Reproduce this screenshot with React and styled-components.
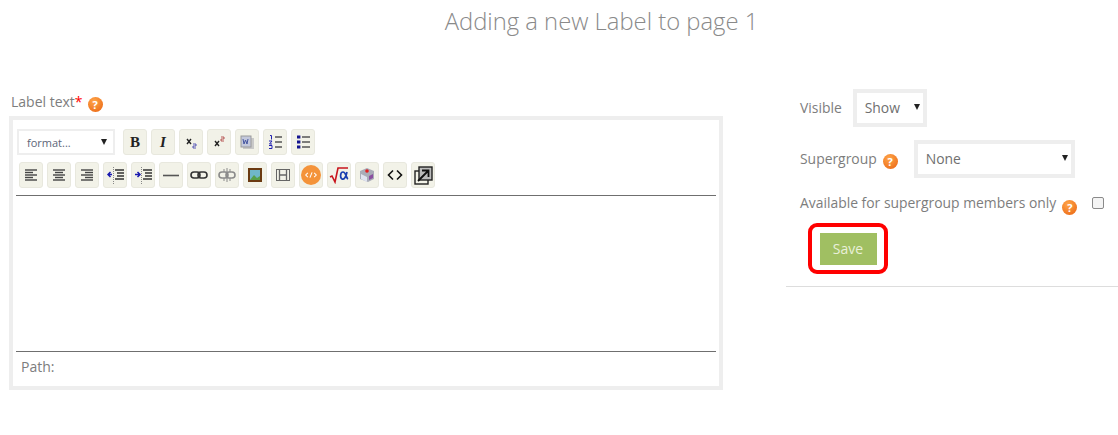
import React from "react";
import styled, { createGlobalStyle } from "styled-components";

const Global = createGlobalStyle`
  html, body { margin: 0; padding: 0; background: #fff; }
  body { font-family: "Open Sans", "Liberation Sans", sans-serif; color: #777; overflow: hidden; }
`;

const Page = styled.div`
  width: 1118px;
  height: 435px;
  overflow: hidden;
`;
const Title = styled.h2`
  margin: 0;
  height: 89px;
  padding-top: 5px;
  box-sizing: border-box;
  text-align: center;
  padding-left: 85px;
  font-size: 23.8px;
  line-height: 33px;
  font-weight: 300;
  color: #8a8a8a;
`;
const Columns = styled.div`
  display: flex;
  align-items: flex-start;
`;
const Left = styled.div`
  width: 714px;
  margin-left: 9px;
`;
const FieldLabel = styled.div`
  box-sizing: border-box;
  display: flex;
  align-items: center;
  height: 27px;
  padding: 0 0 2px 2px;
  font-size: 14px;
  color: #7d7d7d;
  em { color: #f00; font-style: normal; }
`;
const Help = styled.span`
  display: inline-block;
  width: 15px;
  height: 15px;
  margin-left: ${(p) => p.$gap || 5}px;
  margin-top: ${(p) => p.$top || 5}px;
  border-radius: 50%;
  background: radial-gradient(circle at 40% 30%, #ffa64a, #e9620f);
  color: #fff;
  font-size: 11px;
  line-height: 15px;
  font-weight: 700;
  text-align: center;
  flex: none;
`;
const Editor = styled.div`
  box-sizing: border-box;
  width: 714px;
  height: 274px;
  border: 4px solid #eee;
  padding: 9px 3px 0;
  display: flex;
  flex-direction: column;
`;
const Toolbar = styled.div`
  height: 66px;
  border-bottom: 1px solid #6f6f6f;
`;
const Row = styled.div`
  display: flex;
  align-items: center;
  height: 26px;
  margin-bottom: 7px;
  padding-left: ${(p) => p.$pad}px;
  gap: 4px;
`;
const Format = styled.div`
  box-sizing: border-box;
  width: 98px;
  height: 26px;
  margin-right: 4px;
  border: 2px solid #eee;
  display: flex;
  align-items: center;
  justify-content: space-between;
  padding: 0 6px 0 8px;
  font-size: 11px;
  color: #5d6678;
`;
const Caret = styled.span`
  width: 0;
  height: 0;
  border-left: 3px solid transparent;
  border-right: 3px solid transparent;
  border-top: 6px solid #222;
`;
const Tool = styled.div`
  box-sizing: border-box;
  width: 24px;
  height: 26px;
  flex: none;
  background: #f2f2e8;
  border: 1px solid #e8e8de;
  border-radius: 3px;
  display: flex;
  align-items: center;
  justify-content: center;
  font-family: "Liberation Serif", serif;
  font-size: 15px;
  font-weight: 700;
  color: #222;
`;
const Area = styled.div`
  flex: 1;
  border-bottom: 1px solid #6f6f6f;
`;
const PathBar = styled.div`
  height: 34px;
  padding-left: 5px;
  font-size: 14px;
  line-height: 30px;
  color: #7d7d7d;
`;
const Right = styled.div`
  width: 332px;
  margin-left: 63px;
  font-size: 13.9px;
  color: #7d7d7d;
`;
const Fields = styled.div`
  padding-left: 14px;
`;
const Field = styled.div`
  display: flex;
  align-items: center;
  margin-bottom: ${(p) => p.$mb || 0}px;
`;
const FieldText = styled.span`
  margin-bottom: 2px;
`;
const Select = styled.div`
  box-sizing: border-box;
  width: ${(p) => p.$w}px;
  height: 38px;
  margin-left: ${(p) => p.$ml}px;
  border: 4px solid #eee;
  display: flex;
  align-items: center;
  justify-content: space-between;
  padding: 0 3px 2px 8px;
  color: #6f6f6f;
`;
const Check = styled.span`
  box-sizing: border-box;
  width: 12px;
  height: 12px;
  margin-left: 15px;
  margin-top: -1px;
  border: 1px solid #8a8a8a;
  border-radius: 2px;
  background: #f4f4f4;
`;
const Highlight = styled.div`
  box-sizing: border-box;
  width: 80px;
  height: 51px;
  margin: 8px 0 0 22px;
  border: 4px solid #f00;
  border-radius: 9px;
  display: flex;
  align-items: center;
  justify-content: center;
`;
const Save = styled.button`
  width: 57px;
  height: 32px;
  border: 0;
  padding: 0;
  background: #a0bf62;
  color: #e9f0da;
  font-family: inherit;
  font-size: 14px;
`;
const Rule = styled.div`
  margin-top: 12px;
  height: 1px;
  background: #ddd;
`;

const Svg = ({ children, size = 16 }) => (
  <svg width={size} height={size} viewBox="0 0 16 16" fill="none">
    {children}
  </svg>
);
const Lines = ({ rows }) => (
  <Svg>
    {rows.map(([x1, x2], i) => (
      <path key={i} d={`M${x1} ${3 + i * 2.5}H${x2}`} stroke="#444" strokeWidth="1.4" />
    ))}
  </Svg>
);
const Outdent = ({ dir }) => (
  <svg width="19" height="19" viewBox="0 0 19 19" fill="none">
    <path d="M9 4h9M11 7h7M11 10h7M9 13h9" stroke="#333" strokeWidth="1.5" />
    <path d="M7.500 1v17" stroke="#888" strokeDasharray="1 1" />
    <path d={dir ? "M1 8.500h4M3.500 6l2.500 2.500-2.500 2.500" : "M6 8.500H2M4.500 6L2 8.500 4.500 11"} stroke="#1a1ab0" strokeWidth="1.500" />
  </svg>
);
const Link = ({ broken }) => {
  const c = broken ? "#8a8a8a" : "#333";
  return (
    <svg width="18" height="16" viewBox="0 0 18 16" fill="none">
      <rect x="1" y="5" width="9" height="6" rx="3" stroke={c} strokeWidth="1.600" />
      <rect x="8" y="5" width="9" height="6" rx="3" stroke={c} strokeWidth="1.600" />
      {broken && <path d="M9 1v14M6 2v3M12 2v3M6 11v3M12 11v3" stroke={c} />}
    </svg>
  );
};

export default function App() {
  return (
    <Page>
      <Global />
      <Title>Adding a new Label to page 1</Title>
      <Columns>
        <Left>
          <FieldLabel>
            Label text<em>*</em>
            <Help>?</Help>
          </FieldLabel>
          <Editor>
            <Toolbar>
              <Row $pad={1}>
                <Format>
                  format...
                  <Caret />
                </Format>
                <Tool>B</Tool>
                <Tool><i>I</i></Tool>
                <Tool>
                  <Svg><path d="M4 5l4 5M8 5l-4 5" stroke="#222" strokeWidth="1.400" /><path d="M10 10h3v2h-3v2h3" stroke="#33a" strokeWidth=".8" /></Svg>
                </Tool>
                <Tool>
                  <Svg><path d="M4 7l4 5M8 7l-4 5" stroke="#222" strokeWidth="1.400" /><path d="M10 3h3v2h-3v2h3" stroke="#a33" strokeWidth=".8" /></Svg>
                </Tool>
                <Tool>
                  <Svg><rect x="4" y="4" width="11" height="11" fill="#c9c9c9" /><rect x="2" y="2" width="10" height="11" fill="#c3c8dc" stroke="#9a9a9a" /><path d="M4 5l1 5 1.500-4 1.500 4 1-5" stroke="#4455a0" /></Svg>
                </Tool>
                <Tool>
                  <Svg><path d="M8 3h7M8 8h7M8 13h7" stroke="#555" strokeWidth="1.400" /><path d="M3 1.500h1.500v4M2 7h3L2.500 10H5M2 11.500h3v3H2" stroke="#2222b0" /></Svg>
                </Tool>
                <Tool>
                  <Svg><path d="M7 3h8M7 8h8M7 13h8" stroke="#555" strokeWidth="1.400" /><path d="M2 1.500h3.400v3H2zM2 6.500h3.400v3H2zM2 11.500h3.400v3H2z" fill="#14148f" /></Svg>
                </Tool>
              </Row>
              <Row $pad={3}>
                <Tool><Lines rows={[[2, 14], [2, 10], [2, 14], [2, 10], [2, 14]]} /></Tool>
                <Tool><Lines rows={[[2, 14], [4, 12], [2, 14], [4, 12], [2, 14]]} /></Tool>
                <Tool><Lines rows={[[2, 14], [6, 14], [2, 14], [6, 14], [2, 14]]} /></Tool>
                <Tool><Outdent /></Tool>
                <Tool><Outdent dir /></Tool>
                <Tool><svg width="18" height="16" viewBox="0 0 18 16"><path d="M1 8.500h16" stroke="#555" strokeWidth="1.600" /></svg></Tool>
                <Tool><Link /></Tool>
                <Tool><Link broken /></Tool>
                <Tool>
                  <Svg><rect x="1" y="1" width="14" height="14" fill="#6b3a12" /><rect x="3" y="3" width="10" height="10" fill="#6fb7c9" /><path d="M3 13l4-5 3 3 3-2v4z" fill="#58a04a" /></Svg>
                </Tool>
                <Tool>
                  <Svg><rect x="1.500" y="2.500" width="13" height="11" stroke="#666" /><path d="M4.500 3v10M11.500 3v10M5 8h6" stroke="#666" strokeWidth="1.300" /></Svg>
                </Tool>
                <Tool>
                  <svg width="20" height="20" viewBox="0 0 19 19">
                    <circle cx="9.500" cy="9.500" r="9.500" fill="#f4933a" />
                    <path d="M6.500 7.500L4.500 9.500l2 2M12.500 7.500l2 2-2 2M10.500 7l-2 5" stroke="#fff" fill="none" />
                  </svg>
                </Tool>
                <Tool>
                  <svg width="22" height="18" viewBox="0 0 20 18" fill="none">
                    <path d="M1 11l2-1 3 6 3-14h10" stroke="#c8141c" strokeWidth="1.600" />
                    <path d="M18 6c-1 5-3 8-5 7s-2-7 1-7 3 6 5 7" stroke="#1a3fb0" strokeWidth="1.700" />
                  </svg>
                </Tool>
                <Tool>
                  <Svg><path d="M8 1l7 3v8l-6 3-8-3V4z" fill="#a9acb8" /><path d="M2 7l6 3v5l-6-3z" fill="#dfe3f0" /><path d="M10 9l4-2v4l-4 2z" fill="#8a4fa0" /><circle cx="8" cy="4" r="1.800" fill="#e02020" /></Svg>
                </Tool>
                <Tool>
                  <Svg><path d="M6 3.500L1.500 8 6 12.500M10 3.500L14.500 8 10 12.500" stroke="#111" strokeWidth="1.600" /></Svg>
                </Tool>
                <Tool>
                  <svg width="19" height="19" viewBox="0 0 19 19" fill="none">
                    <rect x="1" y="5" width="13" height="13" stroke="#222" strokeWidth="1.400" />
                    <rect x="5" y="1" width="13" height="13" fill="#bbb" stroke="#222" strokeWidth="1.400" />
                    <path d="M4 15L14 5M8 4.500h6.500V11" stroke="#111" strokeWidth="1.800" />
                  </svg>
                </Tool>
              </Row>
            </Toolbar>
            <Area />
            <PathBar>Path:</PathBar>
          </Editor>
        </Left>
        <Right>
          <Fields>
            <Field $mb={13}>
              <FieldText>Visible</FieldText>
              <Select $w={74} $ml={11}>
                Show
                <Caret />
              </Select>
            </Field>
            <Field $mb={13}>
              <FieldText>Supergroup</FieldText>
              <Help $gap={6} $top={5}>?</Help>
              <Select $w={161} $ml={16}>
                None
                <Caret />
              </Select>
            </Field>
            <Field>
              <FieldText>Available for supergroup members only</FieldText>
              <Help $gap={6} $top={9}>?</Help>
              <Check />
            </Field>
          </Fields>
          <Highlight>
            <Save>Save</Save>
          </Highlight>
          <Rule />
        </Right>
      </Columns>
    </Page>
  );
}
